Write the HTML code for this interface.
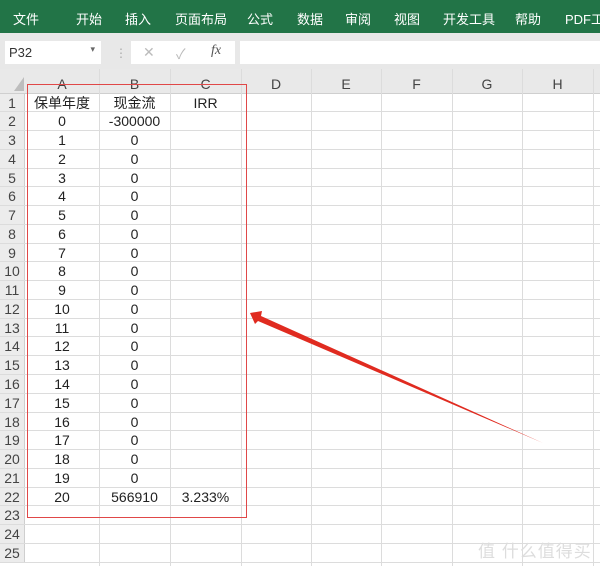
<!DOCTYPE html>
<html><head><meta charset="utf-8"><style>
*{margin:0;padding:0;box-sizing:border-box}
body{width:600px;height:566px;overflow:hidden;background:#fff;position:relative;font-family:"Liberation Sans","Noto Sans CJK SC",sans-serif}
.top{position:absolute;left:0;top:0;width:600px;height:33px;background:#227447;color:#fff;font-size:13px;white-space:nowrap;overflow:hidden}
.top span{position:absolute;top:9px;white-space:nowrap}
.band{position:absolute;left:0;top:33px;width:600px;height:36px;background:#e8e8e8}
.nb{position:absolute;left:5px;top:41px;width:96px;height:23px;background:#fff;font-size:13px;color:#333;padding:4px 4px}
.fx{position:absolute;left:131px;top:41px;width:104px;height:23px;background:#fff;color:#bbb;font-size:14px}
.fb{position:absolute;left:240px;top:41px;width:360px;height:23px;background:#fff}
.hdr{position:absolute;top:69px;height:25px;background:#e9e9e9;border-bottom:1px solid #cfcfcf}
.ch{position:absolute;top:76px;font-size:14px;color:#444;text-align:center}
.grid{position:absolute;left:0;top:93.6px}
.row{position:absolute;left:0;width:600px;height:18.76px;border-bottom:1px solid #dcdcdc}
.rn{position:absolute;left:0;width:25px;height:100%;background:#ececec;color:#444;font-size:14px;text-align:center;line-height:19px;border-right:1px solid #cfcfcf}
.c{position:absolute;top:0;font-size:14px;color:#222;text-align:center;line-height:19px}
.vl{position:absolute;top:69px;width:1px;height:497px;background:#dcdcdc}
</style></head><body>
<div class="top">
<span style="left:13px">文件</span><span style="left:76px">开始</span><span style="left:125px">插入</span><span style="left:175px">页面布局</span><span style="left:247px">公式</span><span style="left:297px">数据</span><span style="left:345px">审阅</span><span style="left:394px">视图</span><span style="left:443px">开发工具</span><span style="left:515px">帮助</span><span style="left:565px">PDF工具</span>
</div>
<div class="band"></div>
<div class="nb">P32<span style="position:absolute;right:6px;top:3px;font-size:9px;color:#666">▾</span></div>
<div style="position:absolute;left:115px;top:46px;color:#aaa;font-size:12px">⋮</div>
<div class="fx"><span style="position:absolute;left:12px;top:3px">✕</span><span style="position:absolute;left:45px;top:3px">✓</span><span style="position:absolute;left:80px;top:2px;font-family:'Liberation Serif',serif;font-style:italic;color:#555">fx</span></div>
<div class="fb"></div>
<div class="hdr" style="left:0;width:600px"></div>
<svg style="position:absolute;left:14px;top:77px" width="12" height="14"><polygon points="10,0 10,14 0,14" fill="#bdbdbd"/></svg>
<div class="ch" style="left:25px;width:74px">A</div>
<div class="ch" style="left:99px;width:71px">B</div>
<div class="ch" style="left:170px;width:71px">C</div>
<div class="ch" style="left:241px;width:70px">D</div>
<div class="ch" style="left:311px;width:70px">E</div>
<div class="ch" style="left:381px;width:71px">F</div>
<div class="ch" style="left:452px;width:70px">G</div>
<div class="ch" style="left:522px;width:71px">H</div>
<div class="grid">
<div class="row" style="top:0"><div class="rn">1</div><div class="c" style="left:25px;width:74px">保单年度</div><div class="c" style="left:99px;width:71px">现金流</div><div class="c" style="left:170px;width:71px">IRR</div></div>
<div class="row" style="top:18.76px"><div class="rn">2</div><div class="c" style="left:25px;width:74px">0</div><div class="c" style="left:99px;width:71px">-300000</div></div>
<div class="row" style="top:37.52px"><div class="rn">3</div><div class="c" style="left:25px;width:74px">1</div><div class="c" style="left:99px;width:71px">0</div></div>
<div class="row" style="top:56.28px"><div class="rn">4</div><div class="c" style="left:25px;width:74px">2</div><div class="c" style="left:99px;width:71px">0</div></div>
<div class="row" style="top:75.04px"><div class="rn">5</div><div class="c" style="left:25px;width:74px">3</div><div class="c" style="left:99px;width:71px">0</div></div>
<div class="row" style="top:93.8px"><div class="rn">6</div><div class="c" style="left:25px;width:74px">4</div><div class="c" style="left:99px;width:71px">0</div></div>
<div class="row" style="top:112.56px"><div class="rn">7</div><div class="c" style="left:25px;width:74px">5</div><div class="c" style="left:99px;width:71px">0</div></div>
<div class="row" style="top:131.32px"><div class="rn">8</div><div class="c" style="left:25px;width:74px">6</div><div class="c" style="left:99px;width:71px">0</div></div>
<div class="row" style="top:150.08px"><div class="rn">9</div><div class="c" style="left:25px;width:74px">7</div><div class="c" style="left:99px;width:71px">0</div></div>
<div class="row" style="top:168.84px"><div class="rn">10</div><div class="c" style="left:25px;width:74px">8</div><div class="c" style="left:99px;width:71px">0</div></div>
<div class="row" style="top:187.6px"><div class="rn">11</div><div class="c" style="left:25px;width:74px">9</div><div class="c" style="left:99px;width:71px">0</div></div>
<div class="row" style="top:206.36px"><div class="rn">12</div><div class="c" style="left:25px;width:74px">10</div><div class="c" style="left:99px;width:71px">0</div></div>
<div class="row" style="top:225.12px"><div class="rn">13</div><div class="c" style="left:25px;width:74px">11</div><div class="c" style="left:99px;width:71px">0</div></div>
<div class="row" style="top:243.88px"><div class="rn">14</div><div class="c" style="left:25px;width:74px">12</div><div class="c" style="left:99px;width:71px">0</div></div>
<div class="row" style="top:262.64px"><div class="rn">15</div><div class="c" style="left:25px;width:74px">13</div><div class="c" style="left:99px;width:71px">0</div></div>
<div class="row" style="top:281.4px"><div class="rn">16</div><div class="c" style="left:25px;width:74px">14</div><div class="c" style="left:99px;width:71px">0</div></div>
<div class="row" style="top:300.16px"><div class="rn">17</div><div class="c" style="left:25px;width:74px">15</div><div class="c" style="left:99px;width:71px">0</div></div>
<div class="row" style="top:318.92px"><div class="rn">18</div><div class="c" style="left:25px;width:74px">16</div><div class="c" style="left:99px;width:71px">0</div></div>
<div class="row" style="top:337.68px"><div class="rn">19</div><div class="c" style="left:25px;width:74px">17</div><div class="c" style="left:99px;width:71px">0</div></div>
<div class="row" style="top:356.44px"><div class="rn">20</div><div class="c" style="left:25px;width:74px">18</div><div class="c" style="left:99px;width:71px">0</div></div>
<div class="row" style="top:375.2px"><div class="rn">21</div><div class="c" style="left:25px;width:74px">19</div><div class="c" style="left:99px;width:71px">0</div></div>
<div class="row" style="top:393.96px"><div class="rn">22</div><div class="c" style="left:25px;width:74px">20</div><div class="c" style="left:99px;width:71px">566910</div><div class="c" style="left:170px;width:71px">3.233%</div></div>
<div class="row" style="top:412.72px"><div class="rn">23</div></div>
<div class="row" style="top:431.48px"><div class="rn">24</div></div>
<div class="row" style="top:450.24px"><div class="rn">25</div></div>
</div>
<div class="vl" style="left:99px"></div><div class="vl" style="left:170px"></div><div class="vl" style="left:241px"></div><div class="vl" style="left:311px"></div><div class="vl" style="left:381px"></div><div class="vl" style="left:452px"></div><div class="vl" style="left:522px"></div><div class="vl" style="left:593px"></div>
<div style="position:absolute;left:27px;top:84px;width:220px;height:434px;border:1.5px solid #e04848"></div>
<svg style="position:absolute;left:0;top:0" width="600" height="566">
<polygon points="250,313 262,311 261,316 543,443 258,321 255,324" fill="#e02b20"/>
</svg>
<div style="position:absolute;left:478px;top:537px;color:#ddd;font-size:17px;letter-spacing:1px">值 什么值得买</div>
</body></html>
